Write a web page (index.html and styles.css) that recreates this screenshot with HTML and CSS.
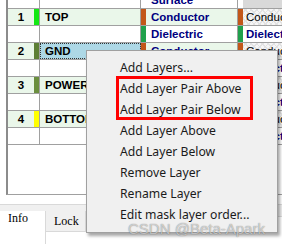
FILE: index.html
```html
<!DOCTYPE html>
<html lang="en">
<head>
    <meta charset="UTF-8">
    <meta name="viewport" content="width=device-width, initial-scale=1.0">
    <title>Layer Stack Manager</title>
    <link rel="stylesheet" href="styles.css">
</head>
<body>
    <div class="pilha">
        <div class="linha">
            <div class="num"></div><div class="faixa"></div><div class="nome"></div>
            <div class="tfaixa"></div><div class="tipo">Surface</div>
            <div class="tfaixa"></div><div class="tipo2 cinza"></div>
        </div>
        <div class="linha camada">
            <div class="num">1</div><div class="faixa" style="background:#13e813"></div><div class="nome">TOP</div>
            <div class="tfaixa cobre"></div><div class="tipo">Conductor</div>
            <div class="tfaixa cobre"></div><div class="tipo2 hachura">Conduc</div>
        </div>
        <div class="linha">
            <div class="num"></div><div class="faixa"></div><div class="nome"></div>
            <div class="tfaixa verde"></div><div class="tipo">Dielectric</div>
            <div class="tfaixa verde"></div><div class="tipo2 dieletrico">Dielect</div>
        </div>
        <div class="linha camada">
            <div class="num">2</div><div class="faixa" style="background:#5d7f35"></div><div class="nome ativo">GND</div>
            <div class="tfaixa cobre"></div><div class="tipo">Conductor</div>
            <div class="tfaixa cobre"></div><div class="tipo2 hachura">Conduc</div>
        </div>
        <div class="linha">
            <div class="num"></div><div class="faixa"></div><div class="nome"></div>
            <div class="tfaixa verde"></div><div class="tipo">Dielectric</div>
            <div class="tfaixa verde"></div><div class="tipo2 dieletrico">Dielect</div>
        </div>
        <div class="linha camada">
            <div class="num">3</div><div class="faixa" style="background:#6b8f3e"></div><div class="nome">POWER</div>
            <div class="tfaixa cobre"></div><div class="tipo">Conductor</div>
            <div class="tfaixa cobre"></div><div class="tipo2 hachura">Conduc</div>
        </div>
        <div class="linha">
            <div class="num"></div><div class="faixa"></div><div class="nome"></div>
            <div class="tfaixa verde"></div><div class="tipo">Dielectric</div>
            <div class="tfaixa verde"></div><div class="tipo2 dieletrico">Dielect</div>
        </div>
        <div class="linha camada">
            <div class="num">4</div><div class="faixa" style="background:#ffff00"></div><div class="nome">BOTTOM</div>
            <div class="tfaixa cobre"></div><div class="tipo">Conductor</div>
            <div class="tfaixa cobre"></div><div class="tipo2 hachura">Conduc</div>
        </div>
        <div class="linha">
            <div class="num"></div><div class="faixa"></div><div class="nome"></div>
            <div class="tfaixa verde"></div><div class="tipo">Dielectric</div>
            <div class="tfaixa verde"></div><div class="tipo2 dieletrico">Dielect</div>
        </div>
    </div>

    <div class="abas">
        <div class="aba selecionada">Info</div>
        <div class="aba">Lock</div>
    </div>

    <div class="menu">
        <div class="item">Add Layers...</div>
        <div class="item">Add Layer Pair Above</div>
        <div class="item">Add Layer Pair Below</div>
        <div class="item">Add Layer Above</div>
        <div class="item">Add Layer Below</div>
        <div class="item">Remove Layer</div>
        <div class="item">Rename Layer</div>
        <div class="item">Edit mask layer order...</div>
    </div>

    <!-- marcacao vermelha da captura -->
    <div class="destaque"></div>
    <div class="marca">CSDN @Beta-Apark</div>
</body>
</html>
```

FILE: styles.css
```css
body {
    margin: 0;
    width: 282px;
    height: 244px;
    overflow: hidden;
    background-color: #fff;
    font-family: 'Liberation Sans', Arial, sans-serif;
}

.pilha {
    margin-top: -8px;
    margin-left: 6px;
    height: 202px;
    border-left: 2px solid #8c8c8c;
    border-bottom: 1px solid #a0a0a0;
}

.linha {
    display: flex;
    height: 16px;
    border-bottom: 1px solid #a0a0a0;
    font-size: 11.5px;
    font-weight: bold;
    line-height: 16px;
    white-space: nowrap;
}

.num {
    width: 26px;
    text-align: center;
    color: #000;
}

.faixa {
    width: 5px;
    border-right: 1px solid #a0a0a0;
}

.nome {
    width: 95px;
    padding-left: 5px;
    border-right: 1px solid #a0a0a0;
    color: #000;
    overflow: hidden;
}

.tfaixa {
    width: 5px;
}

.tipo {
    width: 86px;
    padding-left: 5px;
    border-right: 1px solid #a0a0a0;
    color: #000080;
    overflow: hidden;
}

.tipo2 {
    flex: 1;
    padding-left: 3px;
    overflow: hidden;
}

.camada .num,
.camada .nome,
.camada .tipo {
    background-color: #eaf7ea;
}

.nome.ativo {
    background-color: #add8e6;
    outline: 1px dotted #333;
    outline-offset: -1px;
}

.cobre {
    background-color: #c2571a;
}

.verde {
    background-color: #20a04c;
}

.cinza {
    background-color: #d9d9d9;
}

.hachura {
    font-weight: normal;
    color: #000;
    background-color: #f6f6f6;
    background-image:
        repeating-linear-gradient(45deg, #e2e2e2 0 1px, transparent 1px 4px),
        repeating-linear-gradient(-45deg, #e2e2e2 0 1px, transparent 1px 4px);
}

.dieletrico {
    color: #000080;
}

.abas {
    margin-top: 9px;
    height: 5px;
    border-top: 1px solid #d9d9d9;
    border-bottom: 1px solid #d9d9d9;
    background-color: #f0f0f0;
    display: flex;
    align-items: flex-start;
    padding-top: 6px;
    font-family: 'Liberation Serif', 'Times New Roman', serif;
    font-size: 12px;
}

.aba {
    height: 19px;
    line-height: 19px;
    padding: 0 8px;
    color: #000;
}

.aba.selecionada {
    width: 29px;
    background-color: #fff;
    border-right: 1px solid #d9d9d9;
    height: 34px;
    line-height: 15px;
}

.aba:not(.selecionada) {
    width: 23px;
    padding-top: 1px;
    background-color: #f0f0f0;
    border-right: 1px solid #d9d9d9;
    border-bottom: 1px solid #d9d9d9;
}

.menu {
    position: absolute;
    left: 86px;
    top: 50px;
    width: 190px;
    padding: 6px 0 7px 0;
    background-color: #f0f0f0;
    border: 1px solid #a0a0a0;
    box-shadow: 2px 3px 3px rgba(0, 0, 0, 0.35);
    font-family: 'Noto Sans', 'Open Sans', sans-serif;
    font-size: 12.2px;
}

.item {
    height: 21px;
    line-height: 21px;
    padding-left: 33px;
    color: #1b1b1b;
    white-space: nowrap;
}

.destaque {
    position: absolute;
    left: 116px;
    top: 76px;
    width: 131px;
    height: 38px;
    border: 3px solid #ff0000;
}

.marca {
    position: absolute;
    left: 128px;
    top: 220px;
    font-size: 15px;
    color: rgba(255, 255, 255, 0.6);
    text-shadow: 0 0 1px rgba(0, 0, 0, 0.55);
    white-space: nowrap;
}
```
